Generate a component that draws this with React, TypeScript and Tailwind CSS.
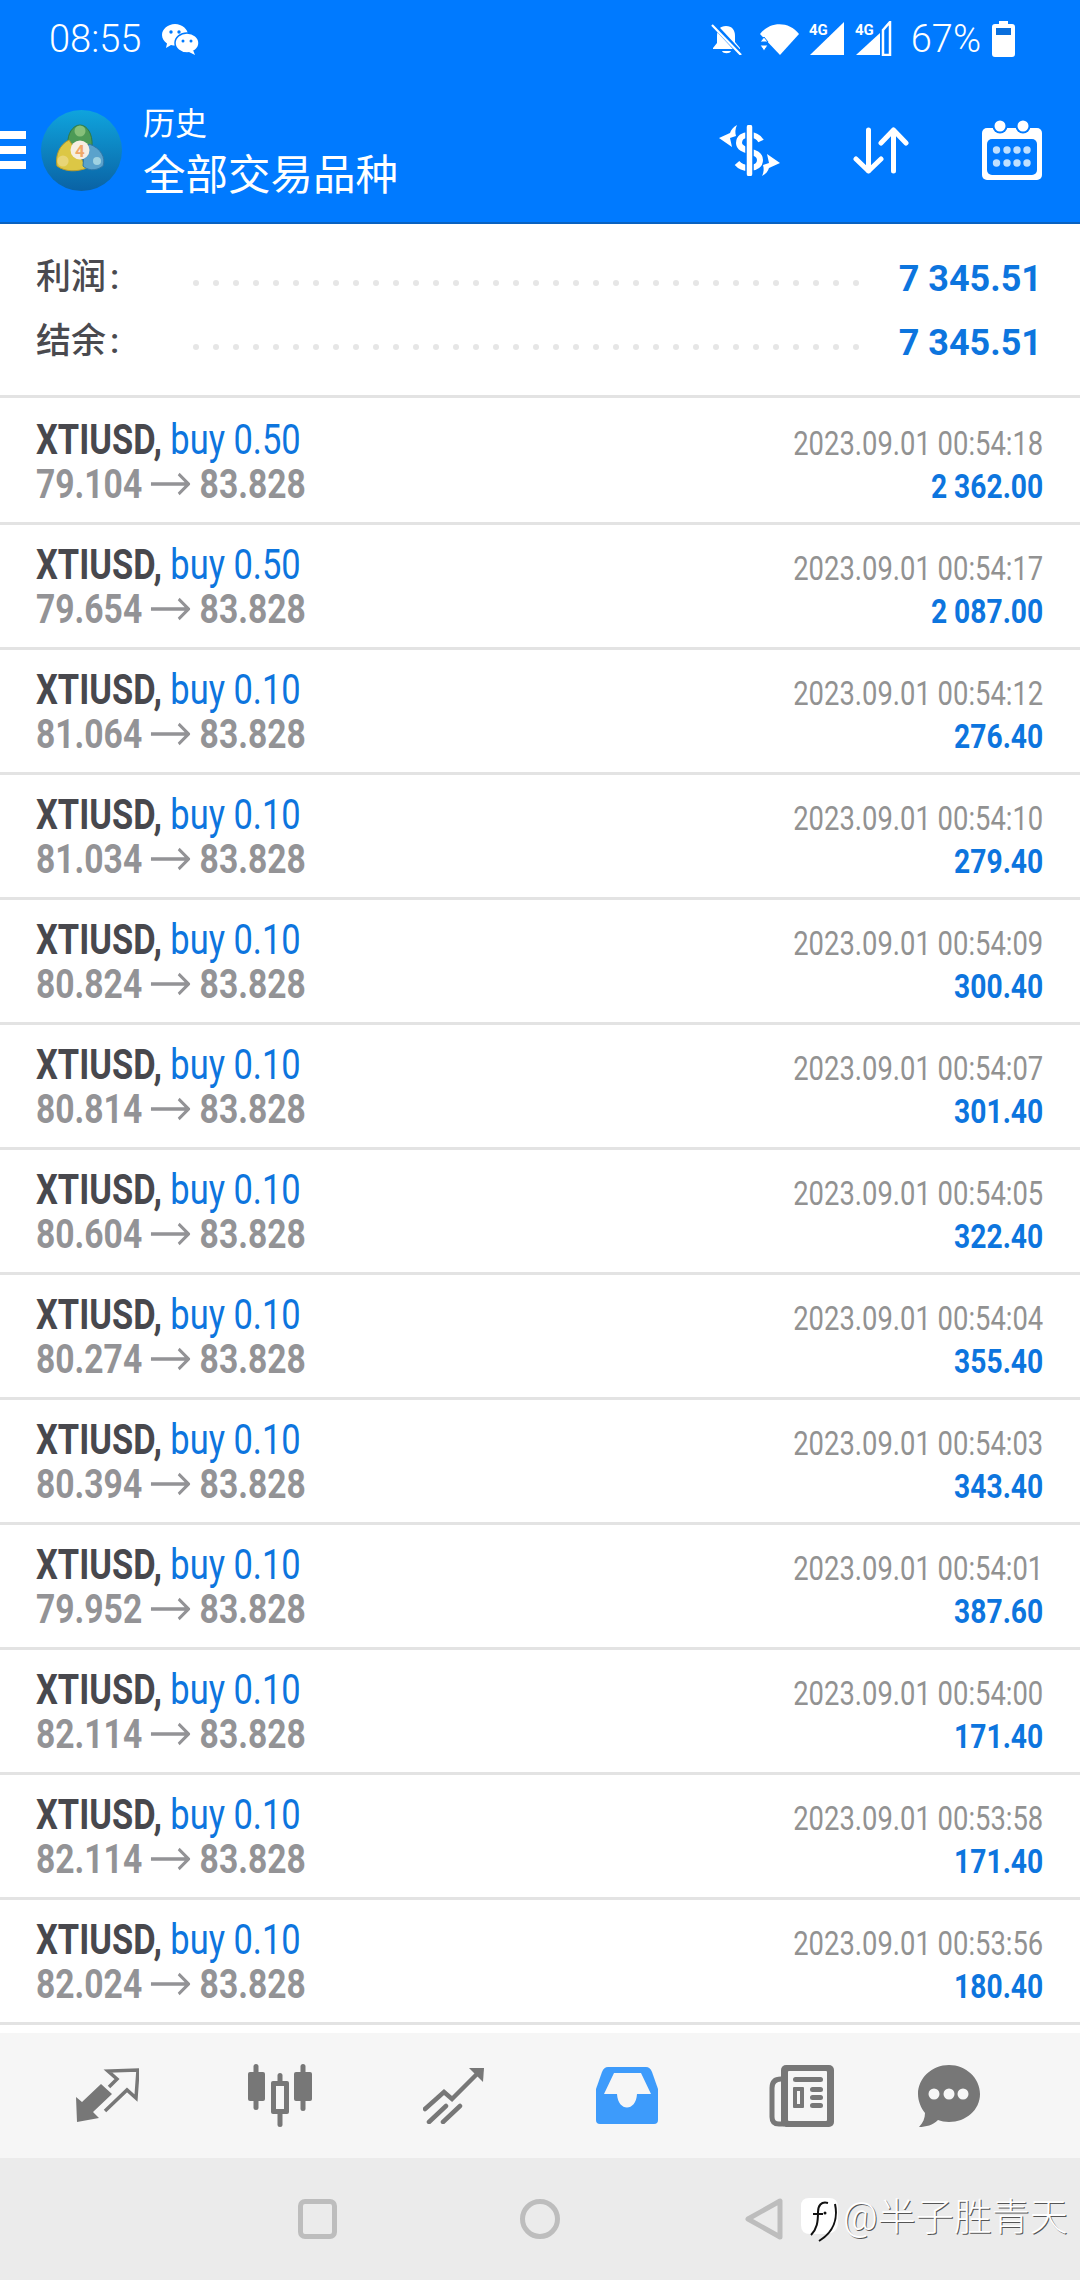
const rows = [
  { lot: "0.50", open: "79.104", time: "00:54:18", profit: "2 362.00" },
  { lot: "0.50", open: "79.654", time: "00:54:17", profit: "2 087.00" },
  { lot: "0.10", open: "81.064", time: "00:54:12", profit: "276.40" },
  { lot: "0.10", open: "81.034", time: "00:54:10", profit: "279.40" },
  { lot: "0.10", open: "80.824", time: "00:54:09", profit: "300.40" },
  { lot: "0.10", open: "80.814", time: "00:54:07", profit: "301.40" },
  { lot: "0.10", open: "80.604", time: "00:54:05", profit: "322.40" },
  { lot: "0.10", open: "80.274", time: "00:54:04", profit: "355.40" },
  { lot: "0.10", open: "80.394", time: "00:54:03", profit: "343.40" },
  { lot: "0.10", open: "79.952", time: "00:54:01", profit: "387.60" },
  { lot: "0.10", open: "82.114", time: "00:54:00", profit: "171.40" },
  { lot: "0.10", open: "82.114", time: "00:53:58", profit: "171.40" },
  { lot: "0.10", open: "82.024", time: "00:53:56", profit: "180.40" },
];

const summary = [
  { label: "利润", value: "7 345.51" },
  { label: "结余", value: "7 345.51" },
];

const dots = Array.from({ length: 34 }, (_, i) => i);

function WeChat() {
  return (
    <svg width="37" height="31" viewBox="0 0 37 31" className="ml-[21px]">
      <path d="M13 0C6 0 0 5 0 11c0 3.500 2 6.500 5 8.500L4 24l5-3c1.500.4 3 .5 4.500.5C20 21.500 26 16.500 26 11 26 5 20 0 13 0Z" fill="#fff" />
      <ellipse cx="25" cy="19" rx="12" ry="10" fill="#fff" stroke="#007aff" strokeWidth="1.500" />
      <path d="M31 26l2 5-6-3Z" fill="#fff" />
      <circle cx="9" cy="8" r="1.700" fill="#007aff" />
      <circle cx="17" cy="8" r="1.700" fill="#007aff" />
      <circle cx="21" cy="17" r="1.500" fill="#007aff" />
      <circle cx="29" cy="17" r="1.500" fill="#007aff" />
    </svg>
  );
}

function BellOff() {
  return (
    <svg width="31" height="31" viewBox="0 0 31 31">
      <path d="M15 2c6 0 9 4 9 10v6l5 6v1H2v-1l4-5v-7c0-6 3-10 9-10Z" fill="#fff" />
      <path d="M11 27h9c-1 3-8 3-9 0Z" fill="#fff" />
      <path d="M2 0l28 30" stroke="#007aff" strokeWidth="5" />
      <path d="M1 1l29 30" stroke="#fff" strokeWidth="2.200" />
    </svg>
  );
}

function Wifi() {
  return (
    <svg width="39" height="32" viewBox="0 0 39 32">
      <path d="M0 11C10 -2 29 -2 39 11L20 32Z" fill="#fff" />
      <path d="M0 19l4-5 4 5ZM0 22h8l-4 6Z" fill="#fff" stroke="#007aff" strokeWidth="1" />
    </svg>
  );
}

function Signal({ weak }: { weak?: boolean }) {
  return (
    <svg width="37" height="35" viewBox="0 0 37 35">
      {weak ? (
        <>
          <path d="M1 34L25 12V34Z" fill="#fff" />
          <path d="M28 9L35 1V34H28Z" fill="none" stroke="#fff" strokeWidth="2.500" />
        </>
      ) : (
        <path d="M1 34L35 1V34Z" fill="#fff" />
      )}
      <rect x="0" y="0" width="20" height="16" fill="#007aff" />
      <text x="0" y="14" fontSize="15" fontWeight="700" fill="#fff" fontFamily="Roboto">4G</text>
    </svg>
  );
}

function Battery() {
  return (
    <svg width="23" height="36" viewBox="0 0 23 36">
      <path d="M7 0h9v3h4q3 0 3 3v27q0 3-3 3H3q-3 0-3-3V6q0-3 3-3h4Z" fill="#fff" />
      <rect x="4" y="7" width="15" height="7" fill="#0a6fdc" />
    </svg>
  );
}

function DollarSwap() {
  const arrow = "M0 13L11 8C12 5 14 2 18 0C16 4 16 8 17 11L11 13L13 22Z";
  return (
    <svg width="61" height="51" viewBox="0 0 61 51">
      <path d="M42 16C38 8 20 7 20 18C20 28 41 24 41 35C41 45 24 45 18 38" fill="none" stroke="#fff" strokeWidth="6" />
      <rect x="27" y="-1" width="7" height="53" rx="3" fill="#fff" stroke="#007aff" strokeWidth="1.500" />
      <path d={arrow} fill="#fff" />
      <path d={arrow} fill="#fff" transform="rotate(180 30.500 25.500)" />
    </svg>
  );
}

function SortArrows() {
  return (
    <svg width="56" height="47" viewBox="0 0 56 47" fill="none" stroke="#fff" strokeWidth="5" strokeLinecap="round" strokeLinejoin="round">
      <path d="M15.500 3V44M3 32L15.500 44L28 32" />
      <path d="M40.500 44V3M28 16L40.500 3L53 16" />
    </svg>
  );
}

function Calendar() {
  return (
    <svg width="60" height="60" viewBox="0 0 60 60">
      <rect x="0" y="8" width="60" height="52" rx="5" fill="#fff" />
      <rect x="5" y="19" width="50" height="36" rx="5" fill="#007aff" />
      <circle cx="18" cy="6" r="7.500" fill="#007aff" />
      <circle cx="41" cy="6" r="7.500" fill="#007aff" />
      <circle cx="18" cy="6" r="5.500" fill="#fff" />
      <circle cx="41" cy="6" r="5.500" fill="#fff" />
      {[14.500, 25, 35, 45].map((x) => (
        <g key={x} fill="#bfe0ff">
          <circle cx={x} cy="30" r="3.700" />
          <circle cx={x} cy="43" r="3.700" />
        </g>
      ))}
    </svg>
  );
}

function Logo() {
  return (
    <svg width="81" height="81" viewBox="0 0 81 81" className="ml-[15px]">
      <defs>
        <linearGradient id="mt" x1="0" y1="0" x2="0" y2="1">
          <stop offset="0" stopColor="#0fa4dd" />
          <stop offset="1" stopColor="#0a62a4" />
        </linearGradient>
      </defs>
      <circle cx="40.500" cy="40.500" r="40.500" fill="url(#mt)" />
      <path d="M27 34C26 24 32 15 39 15C46 15 52 24 51 36L39 40Z" fill="#4d9a56" stroke="#2f7a45" strokeWidth="1" />
      <circle cx="39" cy="21" r="5.500" fill="#86c07a" />
      <path d="M28 30C18 35 14 46 16 56C24 62 36 62 46 58L36 42Z" fill="#dcc745" stroke="#b89b2a" strokeWidth="1" />
      <circle cx="22" cy="51" r="5.600" fill="#e8d576" />
      <path d="M48 34C60 38 65 48 62 56C54 62 46 60 42 56L43 42Z" fill="#5aa2cc" stroke="#2f77a8" strokeWidth="1" />
      <circle cx="56" cy="51" r="4" fill="#9fd2e2" />
      <circle cx="39" cy="40" r="9.500" fill="#f6eee2" />
      <text x="39" y="46.500" textAnchor="middle" fontSize="17" fontWeight="700" fill="#f0a868" fontFamily="Roboto">4</text>
    </svg>
  );
}

function TradeIcon() {
  return (
    <svg width="63" height="55" viewBox="0 0 63 55" className="ml-[76px]">
      <path d="M0 29L6 34L25 16L36 26L17 44L23 50L1 54Z" fill="#777" />
      <path d="M29 43L51 22L60 30L62 2L32 3L41 11L33 19" fill="none" stroke="#777" strokeWidth="3.500" />
    </svg>
  );
}

function CandleIcon() {
  return (
    <svg width="66" height="64" viewBox="0 0 66 64" className="ml-[108px]" fill="#777">
      <rect x="6.500" y="0" width="5" height="46" rx="2.500" />
      <rect x="1" y="8" width="17" height="29" rx="2" />
      <rect x="30.500" y="9" width="5" height="54" rx="2.500" />
      <rect x="24" y="17" width="18" height="33" rx="2" />
      <rect x="29" y="22" width="8" height="23" fill="#f6f6f6" />
      <rect x="53.500" y="0" width="5" height="47" rx="2.500" />
      <rect x="47" y="8" width="18" height="29" rx="2" />
    </svg>
  );
}

function ChartIcon() {
  return (
    <svg width="61" height="57" viewBox="0 0 61 57" className="ml-[110px]" fill="none" stroke="#777" strokeWidth="4.500" strokeLinecap="round">
      <path d="M2 42L21 25L29 32L55 6" />
      <path d="M46 1H61L60 15Z" fill="#777" stroke="none" />
      <path d="M6 55L23 39M20 55L37 39" />
    </svg>
  );
}

function InboxIcon() {
  return (
    <svg width="62" height="57" viewBox="0 0 62 57" className="ml-[112px]">
      <path d="M12 0H50Q54 0 56 5L62 22V53Q62 57 58 57H4Q0 57 0 53V22L6 5Q8 0 12 0Z" fill="#3d9bfb" />
      <path d="M18 6H45L55 27H41C40 45 22 45 21 27H8Z" fill="#f6f6f6" />
    </svg>
  );
}

function NewsIcon() {
  return (
    <svg width="65" height="62" viewBox="0 0 65 62" className="ml-[111px]" fill="#777">
      <path d="M12 14Q3 14 3 23V52Q3 59 10 59H15" fill="none" stroke="#777" strokeWidth="5" />
      <rect x="12" y="0" width="53" height="62" rx="5" />
      <rect x="19" y="6" width="39" height="50" rx="1" fill="#f6f6f6" />
      <rect x="24" y="12" width="30" height="5" rx="2.500" />
      <rect x="24" y="22" width="11" height="21" rx="1" />
      <rect x="28" y="26" width="3" height="13" fill="#f6f6f6" />
      <rect x="41" y="22" width="13" height="5" rx="2.500" />
      <rect x="41" y="30" width="13" height="5" rx="2.500" />
      <rect x="41" y="38" width="13" height="5" rx="2.500" />
    </svg>
  );
}

function ChatIcon() {
  return (
    <svg width="62" height="62" viewBox="0 0 62 62" className="ml-[84px]">
      <path d="M31 0C48 0 62 13 62 29C62 45 48 57 31 57C27 57 23 56 20 55C15 60 8 62 1 62C5 58 7 53 7 48C3 43 0 36 0 29C0 13 14 0 31 0Z" fill="#777" />
      <circle cx="16" cy="29" r="5.500" fill="#f6f6f6" />
      <circle cx="31" cy="29" r="5.500" fill="#f6f6f6" />
      <circle cx="45" cy="29" r="5.500" fill="#f6f6f6" />
    </svg>
  );
}

function Watermark() {
  return (
    <div className="absolute left-[801px] top-[40px] flex items-start">
      <svg width="37" height="45" viewBox="0 0 37 45">
        <path d="M8 0H28Q37 0 37 9V24Q37 36 24 36H9Q0 36 0 27V8Q0 0 8 0Z" fill="#fff" />
        <path d="M12 16H22M27 5C20 3 17 8 17 14C17 24 16 31 10 37M34 6C37 20 33 34 18 43" fill="none" stroke="#111" strokeWidth="2" />
        <circle cx="24" cy="15" r="1.500" fill="#111" />
      </svg>
      <span className="ml-[5px] text-[38px] leading-[38px] font-light whitespace-nowrap text-white [text-shadow:1px_1px_0_#555]">
        @半子胜青天
      </span>
    </div>
  );
}

export default function App() {
  return (
    <div className="w-[1080px] h-[2280px] flex flex-col overflow-hidden bg-white font-['Roboto','Noto_Sans_CJK_SC',sans-serif]">
      <header className="h-[224px] shrink-0 bg-[#007aff] border-b-2 border-[#0a62c0] text-white">
        <div className="h-[78px] flex items-center pl-[49px] pr-[65px]">
          <span className="text-[38px] font-light leading-none">08:55</span>
          <WeChat />
          <div className="ml-auto flex items-center">
            <BellOff />
            <div className="ml-[18px]"><Wifi /></div>
            <div className="ml-[10px] -mt-[2px]"><Signal /></div>
            <div className="ml-[9px] -mt-[2px]"><Signal weak /></div>
            <span className="ml-[19px] text-[38px] font-light leading-none">67%</span>
            <div className="ml-[11px]"><Battery /></div>
          </div>
        </div>
        <div className="h-[144px] flex items-center pr-[38px]">
          <div className="w-[26px] flex flex-col gap-[7px]">
            <div className="h-[8px] bg-white" />
            <div className="h-[8px] bg-white" />
            <div className="h-[8px] bg-white" />
          </div>
          <Logo />
          <div className="ml-[21px] mt-[12px] flex flex-col">
            <span className="text-[32px] leading-[40px]">历史</span>
            <span className="text-[42.500px] leading-[64px]">全部交易品种</span>
          </div>
          <div className="ml-auto"><DollarSwap /></div>
          <div className="ml-[73px]"><SortArrows /></div>
          <div className="ml-[73px]"><Calendar /></div>
        </div>
      </header>

      <section className="h-[174px] shrink-0 pt-[22px] pl-[36px] pr-[38px] border-b-[3px] border-[#e3e3e3] mb-[2px]">
        {summary.map((item) => (
          <div key={item.label} className="h-[64px] flex items-center">
            <span className="w-[157px] text-[35px] font-medium text-[#4a4a4f]">
              {item.label}<span className="ml-[4px]">:</span>
            </span>
            <div className="flex gap-[14px] mt-[10px]">
              {dots.map((d) => (
                <div key={d} className="w-[6px] h-[6px] rounded-full bg-[#e6e6e6]" />
              ))}
            </div>
            <span className="ml-auto mt-[2px] text-[36px] font-bold text-[#0d75de]">{item.value}</span>
          </div>
        ))}
      </section>

      <ul className="flex-1">
        {rows.map((row) => (
          <li key={row.time} className="h-[125px] border-b-[3px] border-[#e3e3e3] pl-[36px] pr-[37px] flex justify-between">
            <div className="pt-[18px] origin-left scale-x-[0.82] whitespace-nowrap">
              <div className="text-[42px] leading-[44px]">
                <span className="font-bold text-[#48484d]">XTIUSD,</span>
                <span className="ml-[10px] text-[#0d75de]">buy {row.lot}</span>
              </div>
              <div className="text-[41px] leading-[44px] font-bold text-[#939396] flex items-center">
                <span>{row.open}</span>
                <svg width="48" height="24" viewBox="0 0 48 24" className="ml-[10px] mr-[12px]" fill="none" stroke="#939396" strokeWidth="3.500">
                  <path d="M0 12H46M34 2L46 12L34 22" />
                </svg>
                <span>83.828</span>
              </div>
            </div>
            <div className="pt-[22px] origin-right scale-x-[0.83] whitespace-nowrap text-right leading-[43px]">
              <div className="text-[33px] text-[#929292]">2023.09.01 {row.time}</div>
              <div className="text-[34px] font-bold text-[#0d75de]">{row.profit}</div>
            </div>
          </li>
        ))}
      </ul>

      <div className="h-[8px] shrink-0" />
      <nav className="h-[125px] shrink-0 bg-[#f6f6f6] flex items-center">
        <TradeIcon />
        <CandleIcon />
        <ChartIcon />
        <InboxIcon />
        <NewsIcon />
        <ChatIcon />
      </nav>
      <div className="relative h-[122px] shrink-0 bg-[#ebebeb] flex items-center">
        <div className="ml-[298px] w-[39px] h-[40px] rounded-[7px] border-[5px] border-[#bdbdbd]" />
        <div className="ml-[183px] w-[40px] h-[40px] rounded-full border-[5px] border-[#bdbdbd]" />
        <svg width="38" height="42" viewBox="0 0 38 42" className="ml-[185px]">
          <path d="M35 3V39L3 21Z" fill="none" stroke="#bdbdbd" strokeWidth="5" strokeLinejoin="round" />
        </svg>
        <Watermark />
      </div>
    </div>
  );
}
